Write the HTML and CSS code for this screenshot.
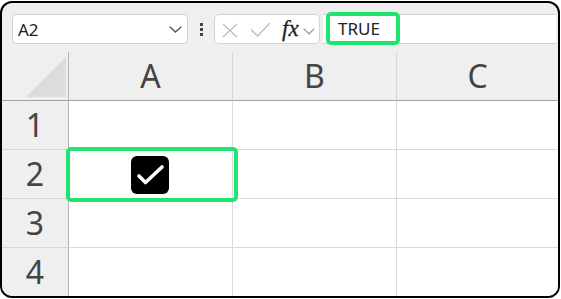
FILE: index.html
```html
<!DOCTYPE html>
<html>
<head>
<meta charset="utf-8">
<link rel="stylesheet" href="styles.css">
</head>
<body>
<div class="frame">
  <div class="toolbar">
    <div class="namebox">
      <span class="name">A2</span>
      <svg class="chev" width="13" height="7" viewBox="0 0 13 7"><polyline points="0.7,0.7 6.5,6 12.3,0.7" fill="none" stroke="#555" stroke-width="1.3"/></svg>
    </div>
    <div class="dots"><span></span><span></span><span></span></div>
    <div class="fxbox">
      <svg class="ico-x" width="16" height="15" viewBox="0 0 16 15"><path d="M1 1 L15 14 M15 1 L1 14" stroke="#bdbdbd" stroke-width="1.3" fill="none"/></svg>
      <svg class="ico-ok" width="21" height="15" viewBox="0 0 21 15"><polyline points="1,7.5 7.5,14 20,1" fill="none" stroke="#bdbdbd" stroke-width="1.3"/></svg>
      <span class="fx">fx</span>
      <svg class="ico-chev" width="12" height="7" viewBox="0 0 12 7"><polyline points="0.6,0.6 6,5.8 11.4,0.6" fill="none" stroke="#9a9a9a" stroke-width="1.2"/></svg>
    </div>
    <div class="formula">
      <div class="hl">TRUE</div>
    </div>
  </div>
  <div class="grid">
    <div class="corner"><div class="tri"></div></div>
    <div class="colhead">A</div>
    <div class="colhead">B</div>
    <div class="colhead last">C</div>

    <div class="rowhead">1</div>
    <div class="cell"></div>
    <div class="cell"></div>
    <div class="cell last"></div>

    <div class="rowhead">2</div>
    <div class="cell sel">
      <div class="selbox"></div>
      <div class="checkbox">
        <svg width="38" height="38" viewBox="0 0 38 38"><polyline points="8,20 14.5,26.5 31,11" fill="none" stroke="#fff" stroke-width="3.6" stroke-linecap="round" stroke-linejoin="round"/></svg>
      </div>
    </div>
    <div class="cell"></div>
    <div class="cell last"></div>

    <div class="rowhead">3</div>
    <div class="cell"></div>
    <div class="cell"></div>
    <div class="cell last"></div>

    <div class="rowhead">4</div>
    <div class="cell"></div>
    <div class="cell"></div>
    <div class="cell last"></div>
  </div>
</div>
</body>
</html>
```

FILE: styles.css
```css
html, body {
  margin: 0;
  padding: 0;
  background: #ffffff;
}
body {
  font-family: "Noto Sans", "Open Sans", sans-serif;
}
.frame {
  margin-top: 1px;
  width: 560px;
  height: 297px;
  box-sizing: border-box;
  border: 2px solid #000;
  border-radius: 12px;
  overflow: hidden;
  background: #efefef;
}
.toolbar {
  height: 49px;
  box-sizing: border-box;
  padding: 11px 2px 0 10px;
  display: flex;
  align-items: flex-start;
}
.namebox {
  width: 176px;
  height: 30px;
  box-sizing: border-box;
  background: #fff;
  border: 1px solid #cfcfcf;
  border-radius: 5px;
  display: flex;
  align-items: center;
  justify-content: space-between;
  padding: 0 5px 0 5px;
}
.name {
  font-size: 17px;
  color: #222;
  line-height: 1;
}
.chev {
  margin-top: 1px;
}
.dots {
  margin-left: 12px;
  width: 3px;
  height: 30px;
  display: flex;
  flex-direction: column;
  justify-content: center;
  gap: 2px;
}
.dots span {
  width: 3px;
  height: 3px;
  background: #444;
}
.fxbox {
  margin-left: 11px;
  width: 106px;
  height: 30px;
  box-sizing: border-box;
  background: #fff;
  border: 1px solid #d4d4d4;
  border-radius: 5px;
  display: flex;
  align-items: center;
  padding-left: 7px;
}
.ico-x {
  margin-top: 2px;
}
.ico-ok {
  margin-left: 12px;
  margin-top: 1px;
}
.fx {
  margin-left: 11px;
  font-family: "Liberation Serif", "DejaVu Serif", serif;
  font-style: italic;
  font-size: 23px;
  color: #222;
  line-height: 1;
  margin-top: -1px;
  -webkit-text-stroke: 0.3px #222;
}
.ico-chev {
  margin-left: 4px;
  margin-top: 5px;
}
.formula {
  flex: 1;
  margin-left: 3px;
  height: 30px;
  box-sizing: border-box;
  background: #fff;
  border-top: 1px solid #cfcfcf;
  border-bottom: 1px solid #cfcfcf;
  position: relative;
}
.hl {
  position: absolute;
  left: 3px;
  top: -3px;
  width: 74px;
  height: 33px;
  box-sizing: border-box;
  border: 4px solid #20e370;
  border-radius: 5px;
  padding-left: 8px;
  font-size: 17px;
  line-height: 25px;
  color: #222;
}
.grid {
  display: grid;
  grid-template-columns: 67px 164px 164px 1fr;
  grid-template-rows: 49px 49px 49px 49px 49px;
}
.grid > div {
  box-sizing: border-box;
}
.corner {
  background: #efefef;
  border-right: 1px solid #b3b3b3;
  border-bottom: 1px solid #a3a3a3;
  display: flex;
  justify-content: flex-end;
  align-items: flex-end;
  padding: 0 2px 3px 0;
}
.tri {
  width: 40px;
  height: 40px;
  background: #dcdcdc;
  clip-path: polygon(100% 0, 100% 100%, 0 100%);
}
.colhead {
  background: #efefef;
  border-right: 1px solid #d6d6d6;
  border-bottom: 1px solid #a3a3a3;
  display: flex;
  align-items: center;
  justify-content: center;
  font-size: 32px;
  color: #444;
  line-height: 1;
}
.rowhead {
  background: #efefef;
  border-right: 1px solid #b3b3b3;
  border-bottom: 1px solid #d6d6d6;
  display: flex;
  align-items: center;
  justify-content: center;
  font-size: 32px;
  color: #444;
  line-height: 1;
}
.cell {
  background: #fff;
  border-right: 1px solid #dadada;
  border-bottom: 1px solid #dadada;
}
.last {
  border-right: none;
}
.sel {
  position: relative;
  display: flex;
  align-items: center;
  justify-content: center;
}
.selbox {
  position: absolute;
  left: -3px;
  top: -3px;
  width: 172px;
  height: 55px;
  box-sizing: border-box;
  border: 4px solid #20e370;
  border-radius: 5px;
  z-index: 2;
}
.checkbox {
  width: 38px;
  height: 38px;
  background: #000;
  border-radius: 6px;
  margin-left: -1px;
  margin-top: 1px;
}
.checkbox svg {
  display: block;
}
```
